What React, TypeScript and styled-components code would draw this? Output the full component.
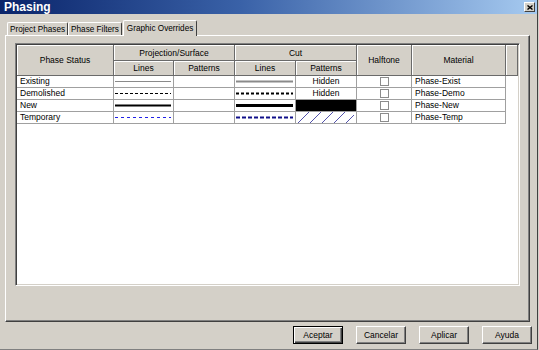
import React from "react";
import styled, { createGlobalStyle } from "styled-components";

const GlobalStyle = createGlobalStyle`
  html, body {
    margin: 0;
    padding: 0;
    background: #d4d0c8;
  }
  body {
    font-family: "Liberation Sans", Arial, sans-serif;
  }
`;

const Window = styled.div`
  width: 538px;
  height: 350px;
  box-sizing: border-box;
  background: #d4d0c8;
  border-right: 1px solid #404040;
  border-bottom: 1px solid #808080;
  display: flex;
  flex-direction: column;
  font-size: 8.5px;
  color: #000;
`;

const TitleBar = styled.div`
  height: 14px;
  flex: none;
  display: flex;
  align-items: center;
  justify-content: space-between;
  padding: 0 2px 0 4px;
  background: linear-gradient(90deg, #0a246a 0%, #3a62a8 45%, #a6caf0 100%);
`;

const Title = styled.span`
  color: #fff;
  font-weight: bold;
  font-size: 12px;
  line-height: 14px;
`;

const CloseButton = styled.div`
  width: 11px;
  height: 10px;
  box-sizing: border-box;
  background: #d4d0c8;
  border: 1px solid;
  border-color: #fff #404040 #404040 #fff;
  display: flex;
  align-items: center;
  justify-content: center;
`;

const TabStrip = styled.div`
  display: flex;
  align-items: flex-end;
  height: 15px;
  margin-top: 6px;
  padding-left: 7px;
  position: relative;
  z-index: 1;
  font-size: 8.2px;
`;

const Tab = styled.div<{ $active?: boolean }>`
  box-sizing: border-box;
  height: ${(p) => (p.$active ? 16 : 13)}px;
  margin-bottom: ${(p) => (p.$active ? -1 : 0)}px;
  margin-left: ${(p) => (p.$active ? 1 : 0)}px;
  padding: 0 ${(p) => (p.$active ? 3 : 2)}px;
  display: flex;
  align-items: center;
  background: #d4d0c8;
  border-top: 1px solid #fff;
  border-left: 1px solid #fff;
  border-right: 1px solid #404040;
  border-radius: 2px 2px 0 0;
  white-space: nowrap;
`;

const Panel = styled.div`
  box-sizing: border-box;
  height: 287px;
  margin: 0 7px 0 5px;
  border: 1px solid;
  border-color: #fff #404040 #404040 #fff;
  box-shadow: inset -1px -1px #808080;
  padding: 7px 9px 0 9px;
`;

const ListView = styled.div`
  box-sizing: border-box;
  height: 243px;
  background: #fff;
  border: 1px solid;
  border-color: #808080 #fff #fff #808080;
  box-shadow: inset 1px 1px #404040, inset -1px -1px #d4d0c8;
  padding: 1px;
`;

const Grid = styled.div`
  display: grid;
  grid-template-columns: 97px 60px 61px 61px 61px 55px 94px 12px;
  grid-template-rows: 16px 15px repeat(4, 12px);
`;

const HeadCell = styled.div<{ $col?: string; $row?: string }>`
  box-sizing: border-box;
  grid-column: ${(p) => p.$col ?? "auto"};
  grid-row: ${(p) => p.$row ?? "auto"};
  background: #d4d0c8;
  border-right: 1px solid #6a6a6a;
  border-bottom: 1px solid #6a6a6a;
  box-shadow: inset 1px 1px #fff;
  display: flex;
  align-items: center;
  justify-content: center;
  white-space: nowrap;
`;

const Cell = styled.div<{ $align?: "left" | "center"; $fill?: string }>`
  box-sizing: border-box;
  background: ${(p) => p.$fill ?? "#fff"};
  border-right: 1px solid #a0a0a0;
  border-bottom: 1px solid #a0a0a0;
  display: flex;
  align-items: center;
  justify-content: ${(p) => (p.$align === "center" ? "center" : "flex-start")};
  padding: 0 ${(p) => (p.$align === "center" ? 0 : 3)}px;
  white-space: nowrap;
  overflow: hidden;
  line-height: 11px;
`;

const LineCell = styled(Cell)`
  padding: 0 2px 0 1px;
`;

const Filler = styled.div``;

const Check = styled.span`
  width: 9px;
  height: 9px;
  box-sizing: border-box;
  border: 1px solid #8c8c8c;
  background: #fff;
`;

const ButtonRow = styled.div`
  display: flex;
  justify-content: flex-end;
  gap: 13px;
  margin-top: 4px;
  padding-right: 5px;
`;

const Button = styled.button<{ $default?: boolean }>`
  width: 50px;
  height: 18px;
  box-sizing: border-box;
  padding: 0;
  font-family: "Liberation Sans", Arial, sans-serif;
  font-size: 8.5px;
  color: #000;
  background: #d4d0c8;
  border: 1px solid;
  border-color: ${(p) => (p.$default ? "#000" : "#fff #404040 #404040 #fff")};
  box-shadow: ${(p) =>
    p.$default
      ? "inset 1px 1px #fff, inset -1px -1px #404040, inset -2px -2px #808080"
      : "inset -1px -1px #808080"};
`;

type Stroke = { color: string; width: number; dash?: string };

const Sample = styled.svg`
  display: block;
  width: 100%;
  height: 11px;
`;

function LineSample({ color, width, dash }: Stroke) {
  return (
    <Sample>
      <line x1="0" y1="5.5" x2="100%" y2="5.5" stroke={color} strokeWidth={width} strokeDasharray={dash} />
    </Sample>
  );
}

function Hatch() {
  return (
    <Sample>
      <defs>
        <pattern id="hatch" patternUnits="userSpaceOnUse" width="12" height="11">
          <line x1="1" y1="11" x2="12" y2="0" stroke="#4040a0" strokeWidth="0.9" />
        </pattern>
      </defs>
      <rect x="0" y="0" width="100%" height="11" fill="url(#hatch)" />
    </Sample>
  );
}

type Row = {
  name: string;
  proj: Stroke;
  cut: Stroke;
  pattern: "hidden" | "solid" | "hatch";
  material: string;
};

const rows: Row[] = [
  {
    name: "Existing",
    proj: { color: "#8a8a8a", width: 1 },
    cut: { color: "#8a8a8a", width: 2 },
    pattern: "hidden",
    material: "Phase-Exist",
  },
  {
    name: "Demolished",
    proj: { color: "#000", width: 1, dash: "3 2" },
    cut: { color: "#000", width: 2, dash: "3 2" },
    pattern: "hidden",
    material: "Phase-Demo",
  },
  {
    name: "New",
    proj: { color: "#000", width: 2 },
    cut: { color: "#000", width: 3 },
    pattern: "solid",
    material: "Phase-New",
  },
  {
    name: "Temporary",
    proj: { color: "#2020e8", width: 1, dash: "3 3" },
    cut: { color: "#10108a", width: 2, dash: "4 2" },
    pattern: "hatch",
    material: "Phase-Temp",
  },
];

export default function App() {
  return (
    <>
      <GlobalStyle />
      <Window>
        <TitleBar>
          <Title>Phasing</Title>
          <CloseButton>
            <svg width="6" height="5" viewBox="0 0 6 5">
              <path d="M0.5 0.5 L5.5 4.5 M5.5 0.5 L0.5 4.5" stroke="#000" strokeWidth="1.4" />
            </svg>
          </CloseButton>
        </TitleBar>

        <TabStrip>
          <Tab>Project Phases</Tab>
          <Tab>Phase Filters</Tab>
          <Tab $active>Graphic Overrides</Tab>
        </TabStrip>

        <Panel>
          <ListView>
            <Grid>
              <HeadCell $col="1" $row="1 / span 2">Phase Status</HeadCell>
              <HeadCell $col="2 / span 2" $row="1">Projection/Surface</HeadCell>
              <HeadCell $col="4 / span 2" $row="1">Cut</HeadCell>
              <HeadCell $col="6" $row="1 / span 2">Halftone</HeadCell>
              <HeadCell $col="7" $row="1 / span 2">Material</HeadCell>
              <HeadCell $col="8" $row="1 / span 2" />
              <HeadCell $col="2" $row="2">Lines</HeadCell>
              <HeadCell $col="3" $row="2">Patterns</HeadCell>
              <HeadCell $col="4" $row="2">Lines</HeadCell>
              <HeadCell $col="5" $row="2">Patterns</HeadCell>

              {rows.map((r) => (
                <React.Fragment key={r.name}>
                  <Cell>{r.name}</Cell>
                  <LineCell>
                    <LineSample {...r.proj} />
                  </LineCell>
                  <Cell />
                  <LineCell>
                    <LineSample {...r.cut} />
                  </LineCell>
                  {r.pattern === "hidden" && <Cell $align="center">Hidden</Cell>}
                  {r.pattern === "solid" && <Cell $fill="#000" />}
                  {r.pattern === "hatch" && (
                    <LineCell>
                      <Hatch />
                    </LineCell>
                  )}
                  <Cell $align="center">
                    <Check />
                  </Cell>
                  <Cell>{r.material}</Cell>
                  <Filler />
                </React.Fragment>
              ))}
            </Grid>
          </ListView>
        </Panel>

        <ButtonRow>
          <Button $default>Aceptar</Button>
          <Button>Cancelar</Button>
          <Button>Aplicar</Button>
          <Button>Ayuda</Button>
        </ButtonRow>
      </Window>
    </>
  );
}
